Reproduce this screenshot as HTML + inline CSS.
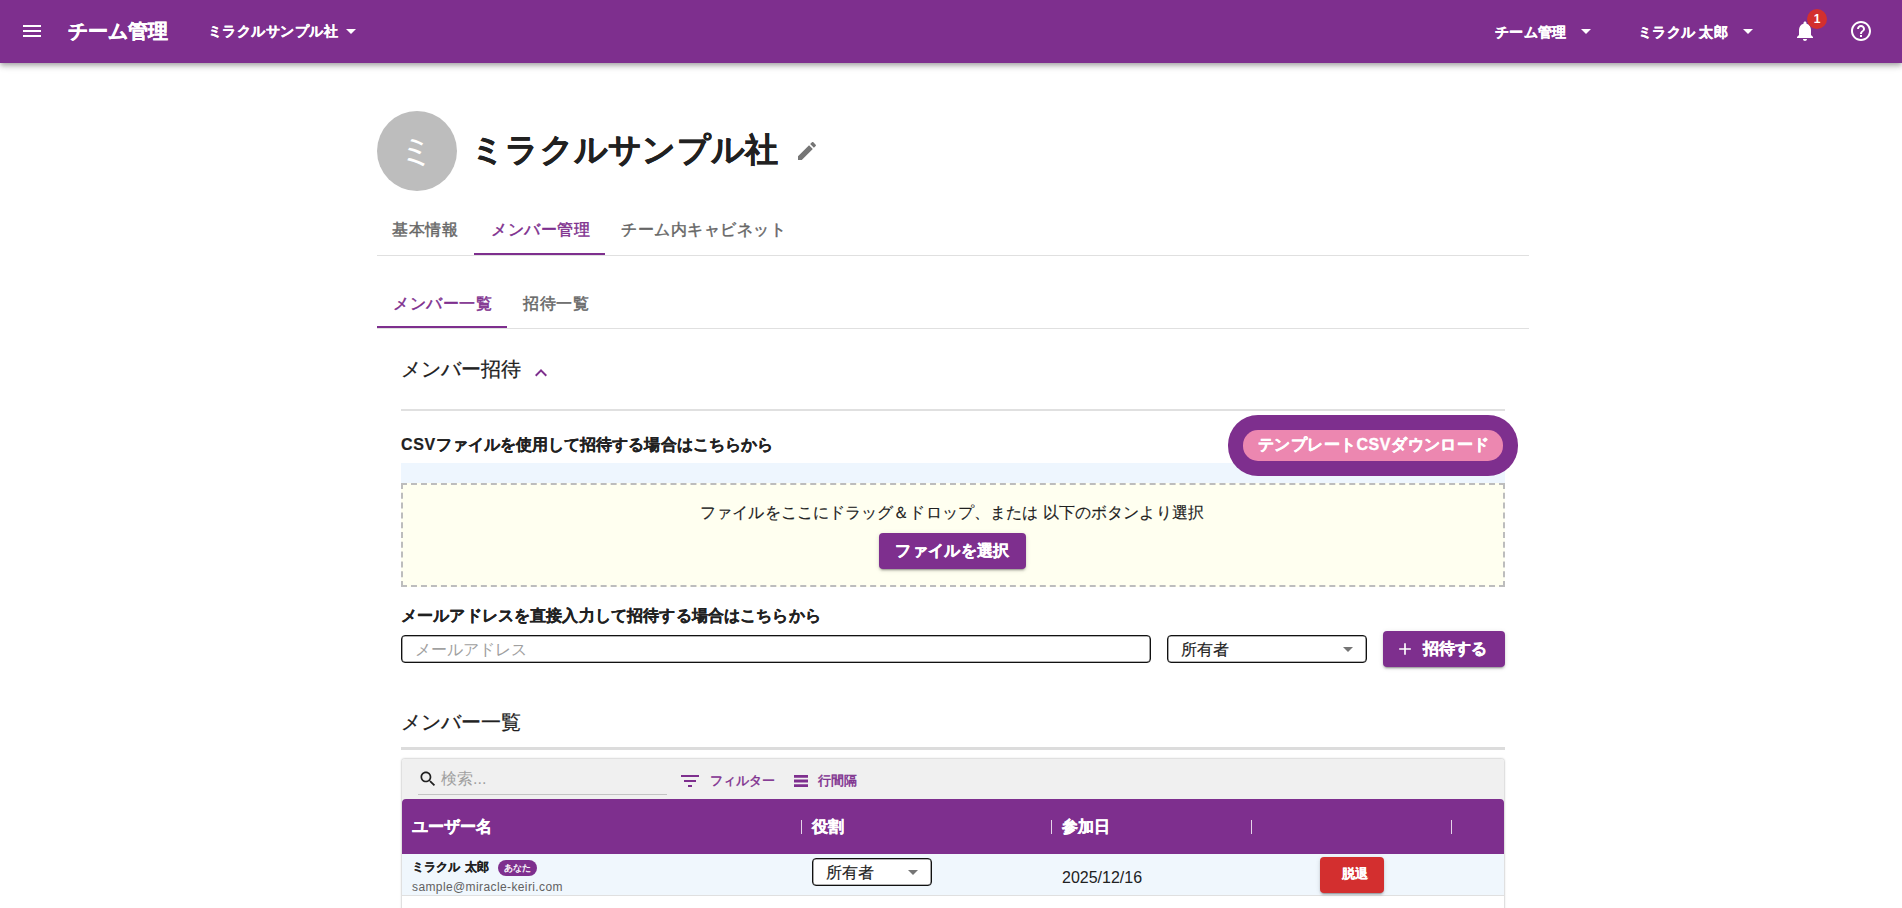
<!DOCTYPE html>
<html lang="ja">
<head>
<meta charset="utf-8">
<style>
html,body{margin:0;padding:0;}
body{width:1902px;height:908px;overflow:hidden;background:#fff;position:relative;font-family:"Liberation Sans",sans-serif;color:#212121;}
.a{position:absolute;white-space:nowrap;}
.t16{font-size:16px;line-height:16px;}
.b{font-weight:bold;-webkit-text-stroke:0.35px currentColor;}
.m{-webkit-text-stroke:0.45px currentColor;}
svg{position:absolute;display:block;}
#bar{position:absolute;left:0;top:0;width:1902px;height:63px;background:#7e2f8e;box-shadow:0px 2px 4px -1px rgba(0,0,0,0.2),0px 4px 5px 0px rgba(0,0,0,0.14),0px 1px 10px 0px rgba(0,0,0,0.12);z-index:5;}
.w{color:#fff;}
.pur{color:#7e2f8e;}
.grey{color:#666;}
.line{position:absolute;background:#e0e0e0;}
.btn{position:absolute;background:#7e2f8e;border-radius:4px;box-shadow:0px 3px 1px -2px rgba(0,0,0,0.2),0px 2px 2px 0px rgba(0,0,0,0.14),0px 1px 5px 0px rgba(0,0,0,0.12);}
</style>
</head>
<body>
<div id="bar">
  <svg style="left:20px;top:19px" width="24" height="24" viewBox="0 0 24 24"><path fill="#fff" d="M3 18h18v-2H3v2zm0-5h18v-2H3v2zm0-7v2h18V6H3z"/></svg>
  <div class="a w b" style="left:68px;top:21px;font-size:20px;line-height:20px">チーム管理</div>
  <div class="a w" style="left:207.5px;top:24px;font-size:14px;line-height:14px;letter-spacing:0.5px;font-weight:bold;-webkit-text-stroke:0.3px #fff">ミラクルサンプル社</div>
  <svg style="left:339px;top:19px" width="24" height="24" viewBox="0 0 24 24"><path fill="#fff" d="M7 10l5 5 5-5z"/></svg>
  <div class="a w" style="left:1495px;top:25px;font-size:14px;line-height:14px;letter-spacing:0.3px;font-weight:bold;-webkit-text-stroke:0.3px #fff">チーム管理</div>
  <svg style="left:1574px;top:19px" width="24" height="24" viewBox="0 0 24 24"><path fill="#fff" d="M7 10l5 5 5-5z"/></svg>
  <div class="a w" style="left:1638px;top:25px;font-size:14px;line-height:14px;letter-spacing:0.3px;font-weight:bold;-webkit-text-stroke:0.3px #fff">ミラクル 太郎</div>
  <svg style="left:1736px;top:19px" width="24" height="24" viewBox="0 0 24 24"><path fill="#fff" d="M7 10l5 5 5-5z"/></svg>
  <svg style="left:1793px;top:19px" width="24" height="24" viewBox="0 0 24 24"><path fill="#fff" d="M12 22c1.1 0 2-.9 2-2h-4c0 1.1.89 2 2 2zm6-6v-5c0-3.07-1.64-5.64-4.5-6.32V4c0-.83-.67-1.5-1.5-1.5s-1.5.67-1.5 1.5v.68C7.63 5.36 6 7.92 6 11v5l-2 2v1h16v-1l-2-2z"/></svg>
  <div class="a" style="left:1807px;top:9px;width:20px;height:20px;border-radius:10px;background:#d32f2f;color:#fff;font-size:12px;line-height:20px;text-align:center;font-weight:bold">1</div>
  <svg style="left:1849px;top:19px" width="24" height="24" viewBox="0 0 24 24"><path fill="#fff" d="M11 18h2v-2h-2v2zm1-16C6.48 2 2 6.48 2 12s4.480 10 10 10 10-4.48 10-10S17.52 2 12 2zm0 18c-4.41 0-8-3.59-8-8s3.59-8 8-8 8 3.59 8 8-3.59 8-8 8zm0-14c-2.21 0-4 1.79-4 4h2c0-1.1.9-2 2-2s2 .9 2 2c0 2-3 1.75-3 5h2c0-2.250 3-2.5 3-5 0-2.21-1.79-4-4-4z"/></svg>
</div>

<!-- avatar + title -->
<div class="a" style="left:377px;top:111px;width:80px;height:80px;border-radius:40px;background:#bdbdbd;color:#fff;font-size:35px;line-height:80px;text-align:center">ミ</div>
<div class="a b" style="left:471px;top:133px;font-size:33px;line-height:33px;letter-spacing:0.3px;-webkit-text-stroke:0.5px #212121">ミラクルサンプル社</div>
<svg style="left:795px;top:139px" width="24" height="24" viewBox="0 0 24 24"><path fill="#757575" d="M3 17.25V21h3.75L17.81 9.94l-3.75-3.75L3 17.25zM20.71 7.04c.39-.39.39-1.02 0-1.41l-2.34-2.34c-.39-.39-1.02-.39-1.41 0l-1.83 1.83 3.75 3.75 1.83-1.83z"/></svg>

<!-- tabs -->
<div class="line" style="left:377px;top:255px;width:1152px;height:1px"></div>
<div class="a" style="left:474px;top:253px;width:131px;height:2px;background:#7e2f8e"></div>
<div class="a t16 grey m" style="left:392px;top:222px;letter-spacing:0.5px">基本情報</div>
<div class="a t16 pur m" style="left:491px;top:222px;letter-spacing:0.5px">メンバー管理</div>
<div class="a t16 grey m" style="left:621px;top:222px;letter-spacing:0.5px">チーム内キャビネット</div>

<div class="line" style="left:377px;top:328px;width:1152px;height:1px"></div>
<div class="a" style="left:377px;top:326px;width:130px;height:2px;background:#7e2f8e"></div>
<div class="a t16 pur m" style="left:393px;top:296px;letter-spacing:0.5px">メンバー一覧</div>
<div class="a t16 grey m" style="left:523px;top:296px;letter-spacing:0.5px">招待一覧</div>

<!-- invite section -->
<div class="a" style="left:401px;top:359px;font-size:20px;line-height:20px;-webkit-text-stroke:0.25px #212121">メンバー招待</div>
<svg style="left:529px;top:361px" width="24" height="24" viewBox="0 0 24 24"><path fill="#7e2f8e" d="M12 8l-6 6 1.41 1.41L12 10.83l4.59 4.58L18 14z"/></svg>
<div class="line" style="left:401px;top:409px;width:1104px;height:2px"></div>

<div class="a t16 b" style="left:401px;top:437px;letter-spacing:0.06px;-webkit-text-stroke:0.2px #212121"><span style="letter-spacing:0.6px">CSV</span>ファイルを使用して招待する場合はこちらから</div>
<div class="a" style="left:401px;top:463px;width:1104px;height:20px;background:#eef6fe"></div>
<div class="a" style="left:1228px;top:415px;width:290px;height:61px;border-radius:30px;background:#7e2f8e"></div>
<div class="a" style="left:1243px;top:430px;width:260px;height:31px;border-radius:15px;background:#ec87b0"></div>
<div class="a t16 b w" style="left:1258px;top:437px;letter-spacing:0.4px">テンプレート<span style="letter-spacing:0.6px">CSV</span>ダウンロード</div>

<div class="a" style="left:401px;top:483px;width:1100px;height:100px;border:2px dashed #bdbdbd;background:#fffff0"></div>
<div class="a t16" style="left:400px;top:505px;width:1104px;text-align:center;letter-spacing:0.1px;-webkit-text-stroke:0.15px #212121">ファイルをここにドラッグ＆ドロップ、または 以下のボタンより選択</div>
<div class="btn" style="left:879px;top:533px;width:147px;height:36px"></div>
<div class="a t16 b w" style="left:879px;top:543px;width:147px;text-align:center;letter-spacing:0.3px">ファイルを選択</div>

<div class="a t16 b" style="left:401px;top:608px;letter-spacing:0.15px;-webkit-text-stroke:0.2px #212121">メールアドレスを直接入力して招待する場合はこちらから</div>
<div class="a" style="left:401px;top:635px;width:748px;height:26px;border:1px solid #111;box-shadow:inset 0 0 0 0.6px rgba(0,0,0,0.6);border-radius:4px"></div>
<div class="a t16" style="left:415px;top:642px;color:#a0a0a0">メールアドレス</div>
<div class="a" style="left:1167px;top:635px;width:198px;height:26px;border:1px solid #111;box-shadow:inset 0 0 0 0.6px rgba(0,0,0,0.6);border-radius:4px"></div>
<div class="a t16" style="left:1181px;top:642px;-webkit-text-stroke:0.15px #212121">所有者</div>
<svg style="left:1336px;top:637px" width="24" height="24" viewBox="0 0 24 24"><path fill="#757575" d="M7 10l5 5 5-5z"/></svg>
<div class="btn" style="left:1383px;top:631px;width:122px;height:36px"></div>
<svg style="left:1395px;top:639px" width="20" height="20" viewBox="0 0 24 24"><path fill="#fff" d="M19 13h-6v6h-2v-6H5v-2h6V5h2v6h6v2z"/></svg>
<div class="a t16 b w" style="left:1423px;top:641px">招待する</div>

<!-- member list -->
<div class="a" style="left:401px;top:712px;font-size:20px;line-height:20px;-webkit-text-stroke:0.25px #212121">メンバー一覧</div>
<div class="a" style="left:401px;top:747px;width:1104px;height:3px;background:#dcdcdc"></div>

<div class="a" style="left:401px;top:758px;width:1102px;height:160px;border:1px solid #e0e0e0;border-radius:4px;background:#fff;overflow:hidden;box-shadow:0 0 2px rgba(0,0,0,0.12)">
  <div class="a" style="left:0;top:0;width:1102px;height:41px;background:#f0f0f0"></div>
</div>
<svg style="left:418px;top:769px" width="20" height="20" viewBox="0 0 24 24"><path fill="#212121" d="M15.5 14h-.79l-.28-.27C15.41 12.59 16 11.11 16 9.5 16 5.910 13.09 3 9.5 3S3 5.91 3 9.5 5.91 16 9.5 16c1.61 0 3.09-.59 4.23-1.57l.27.28v.79l5 4.99L20.49 19l-4.99-5zm-6 0C7.01 14 5 11.99 5 9.5S7.01 5 9.5 5 14 7.010 14 9.5 11.99 14 9.5 14z"/></svg>
<div class="a t16" style="left:441px;top:771px;color:#a0a0a0">検索...</div>
<div class="a" style="left:418px;top:794px;width:249px;height:1px;background:#c4c4c4"></div>
<svg style="left:678px;top:769px" width="24" height="24" viewBox="0 0 24 24"><path fill="#7e2f8e" d="M10 18h4v-2h-4v2zM3 6v2h18V6H3zm3 7h12v-2H6v2z"/></svg>
<div class="a pur" style="left:710px;top:774px;font-size:13px;line-height:13px;-webkit-text-stroke:0.45px #7e2f8e">フィルター</div>
<svg style="left:794px;top:775px" width="14" height="12" viewBox="0 0 14 12"><path fill="#7e2f8e" d="M0 0h14v2.8H0zM0 4.6h14v2.8H0zM0 9.2h14v2.8H0z"/></svg>
<div class="a pur" style="left:818px;top:774px;font-size:13px;line-height:13px;-webkit-text-stroke:0.45px #7e2f8e">行間隔</div>

<div class="a" style="left:402px;top:799px;width:1102px;height:55px;background:#7e2f8e;border-radius:4px 4px 0 0"></div>
<div class="a t16 b w" style="left:412px;top:819px">ユーザー名</div>
<div class="a" style="left:801px;top:820px;width:1px;height:14px;background:rgba(255,255,255,0.8)"></div>
<div class="a t16 b w" style="left:812px;top:819px">役割</div>
<div class="a" style="left:1051px;top:820px;width:1px;height:14px;background:rgba(255,255,255,0.8)"></div>
<div class="a t16 b w" style="left:1062px;top:819px">参加日</div>
<div class="a" style="left:1251px;top:820px;width:1px;height:14px;background:rgba(255,255,255,0.8)"></div>
<div class="a" style="left:1451px;top:820px;width:1px;height:14px;background:rgba(255,255,255,0.8)"></div>

<div class="a" style="left:402px;top:854px;width:1102px;height:41px;background:#f0f7fd;border-bottom:1px solid #e0e0e0"></div>
<div class="a" style="left:412px;top:861px;font-size:12px;line-height:12px;font-weight:bold;-webkit-text-stroke:0.2px #212121;word-spacing:2px">ミラクル 太郎</div>
<div class="a" style="left:498px;top:860px;width:39px;height:16px;border-radius:8px;background:#7e2f8e;color:#fff;font-size:9px;line-height:16px;text-align:center;-webkit-text-stroke:0.3px #fff">あなた</div>
<div class="a" style="left:412px;top:880px;font-size:12px;line-height:14px;color:#616161;letter-spacing:0.39px">sample@miracle-keiri.com</div>
<div class="a" style="left:812px;top:858px;width:118px;height:26px;border:1px solid #111;box-shadow:inset 0 0 0 0.6px rgba(0,0,0,0.6);border-radius:4px;background:#fff"></div>
<div class="a t16" style="left:826px;top:865px;-webkit-text-stroke:0.15px #212121">所有者</div>
<svg style="left:901px;top:860px" width="24" height="24" viewBox="0 0 24 24"><path fill="#757575" d="M7 10l5 5 5-5z"/></svg>
<div class="a t16" style="left:1062px;top:870px">2025/12/16</div>
<div class="btn" style="left:1320px;top:857px;width:64px;height:36px;background:#d32f2f"></div>
<div class="a w" style="left:1322.5px;top:868px;width:64px;text-align:center;font-size:12.5px;line-height:12.5px;font-weight:bold;-webkit-text-stroke:0.25px #fff">脱退</div>
</body>
</html>
